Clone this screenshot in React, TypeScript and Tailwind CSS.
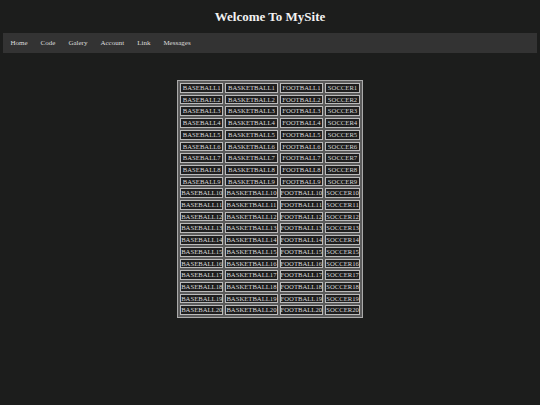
const links = ['Home', 'Code', 'Galery', 'Account', 'Link', 'Messages'];
const sports = ['BASEBALL', 'BASKETBALL', 'FOOTBALL', 'SOCCER'];
const rows = Array.from({ length: 20 }, (_, i) => i + 1);

export default function App() {
  return (
    <div className="min-h-[405px] bg-[#1c1d1c] px-[3px] pt-[9px] text-white" style={{ fontFamily: '"Liberation Serif", "Times New Roman", serif' }}>
      <h1 className="text-center text-[13px] font-bold leading-[16px] text-[#f2f2f2]">Welcome To MySite</h1>
      <nav className="mt-[8px] flex h-[20px] items-center bg-[#333333] px-[1px]">
        {links.map((l) => (
          <a key={l} className="px-[6.5px] text-[7px] text-[#dddddd]">
            {l}
          </a>
        ))}
      </nav>
      <div className="mt-[27px] flex justify-center">
        <table className="border border-[#aaaaaa] bg-[#5a5a5a] border-separate border-spacing-[2px]">
          <tbody>
            {rows.map((n) => (
              <tr key={n}>
                {sports.map((s) => (
                  <td key={s} className="border border-[#bbbbbb] bg-[#1e1e1e] px-0 py-0 text-center text-[6.7px] leading-[7.7px] text-[#d8d8d8]">
                    {s}
                    {n}
                  </td>
                ))}
              </tr>
            ))}
          </tbody>
        </table>
      </div>
    </div>
  );
}
